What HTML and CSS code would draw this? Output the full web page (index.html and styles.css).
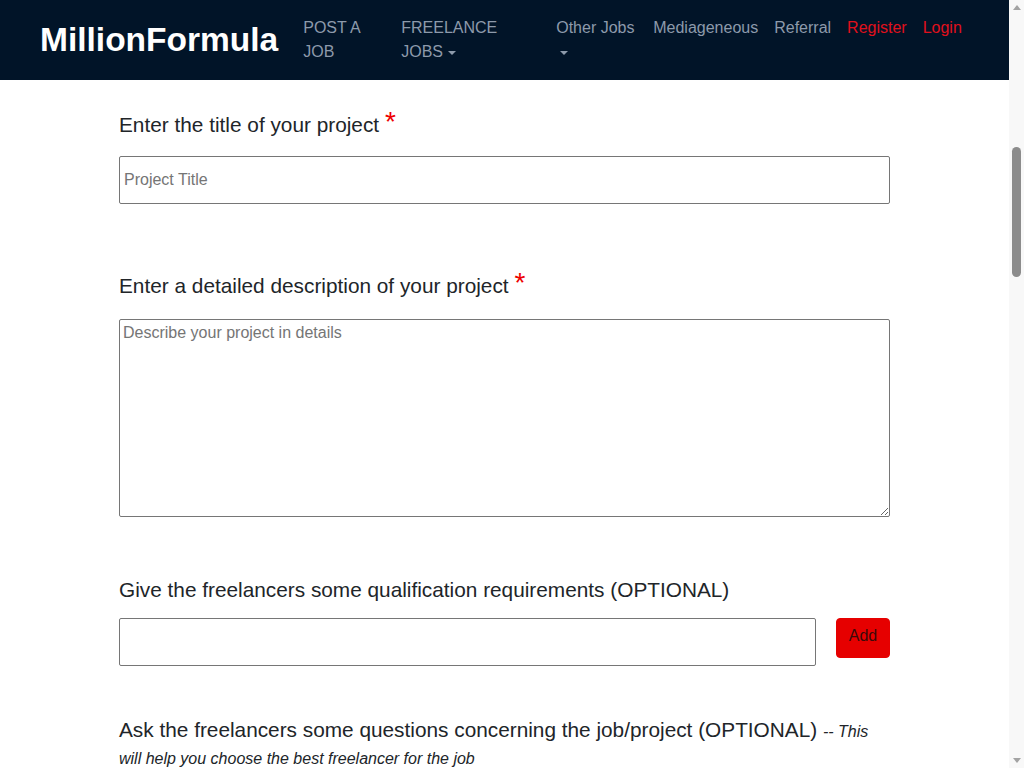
FILE: index.html
```html
<!DOCTYPE html>
<html lang="en">
<head>
<meta charset="utf-8">
<title>MillionFormula - Post a job</title>
<link rel="stylesheet" href="styles.css">
</head>
<body>
<header class="navbar">
  <a class="brand" href="#">MillionFormula</a>
  <nav class="nav">
    <a class="nav-link w-post" href="#">POST A JOB</a>
    <a class="nav-link w-free" href="#">FREELANCE JOBS <span class="caret"></span></a>
    <a class="nav-link w-other" href="#">Other Jobs <span class="caret"></span></a>
    <a class="nav-link" href="#">Mediageneous</a>
    <a class="nav-link" href="#">Referral</a>
    <a class="nav-link red" href="#">Register</a>
    <a class="nav-link red" href="#">Login</a>
  </nav>
</header>
<main class="container">
  <div class="group g1">
    <label class="label">Enter the title of your project <span class="req">*</span></label>
    <input class="field" type="text" placeholder="Project Title">
  </div>
  <div class="group g2">
    <label class="label">Enter a detailed description of your project <span class="req">*</span></label>
    <textarea class="field area" placeholder="Describe your project in details"></textarea>
  </div>
  <div class="group g3">
    <label class="label">Give the freelancers some qualification requirements (OPTIONAL)</label>
    <div class="row">
      <input class="field" type="text">
      <button class="btn-add" type="button">Add</button>
    </div>
  </div>
  <div class="group g4">
    <label class="label">Ask the freelancers some questions concerning the job/project (OPTIONAL) <em class="note">-- This will help you choose the best freelancer for the job</em></label>
    <div class="row">
      <input class="field" type="text">
      <button class="btn-add" type="button">Add</button>
    </div>
  </div>
  <div class="group g5">
    <label class="label">What is your budget for this project? <span class="req">*</span></label>
    <input class="field" type="text" placeholder="Budget">
  </div>
  <div class="group g5">
    <label class="label">How many days should the project last? <span class="req">*</span></label>
    <input class="field" type="text" placeholder="Duration in days">
  </div>
</main>
<div class="scrollbar" aria-hidden="true">
  <span class="sb-arrow up"></span>
  <div class="sb-track"><span class="sb-thumb"></span></div>
  <span class="sb-arrow down"></span>
</div>
</body>
</html>
```
FILE: styles.css
```css
html, body {
  margin: 0;
  padding: 0;
}
body {
  font-family: "Liberation Sans", Arial, sans-serif;
  color: #212529;
  background: #fff;
  margin-right: 15px;
}
.navbar {
  height: 80px;
  background: #011428;
  display: flex;
  align-items: flex-start;
  padding: 0 40px;
  box-sizing: border-box;
}
.brand {
  font-size: 33.5px;
  font-weight: bold;
  color: #fff;
  text-decoration: none;
  line-height: 80px;
  margin-right: 17px;
  white-space: nowrap;
}
.nav {
  display: flex;
  align-items: flex-start;
  padding-top: 16px;
  margin-left: auto;
}
.nav-link {
  display: block;
  padding: 0 8px;
  font-size: 16px;
  line-height: 24px;
  color: #8d9aab;
  text-decoration: none;
  white-space: nowrap;
}
.nav-link.w-post { width: 82px; white-space: normal; }
.nav-link.w-free { width: 139px; white-space: normal; }
.nav-link.w-other { width: 81px; white-space: normal; }
.nav-link.red { color: #e0101c; }
.caret {
  display: inline-block;
  width: 0;
  height: 0;
  border-left: 4px solid transparent;
  border-right: 4px solid transparent;
  border-top: 4px solid #8d9aab;
  vertical-align: middle;
  margin-left: 1px;
}
.w-other .caret { margin-left: 4px; }
.container {
  width: 771px;
  margin: 0 auto;
  padding-top: 31px;
  padding-bottom: 80px;
}
.group {
  display: flex;
  flex-direction: column;
}
.label {
  font-size: 20.8px;
  line-height: 27px;
  color: #212529;
  margin-bottom: 18px;
}
.req {
  color: #ee0000;
  font-size: 28px;
  line-height: 0;
  position: relative;
  top: -1px;
}
.note {
  font-size: 16px;
  line-height: 16px;
  color: #212529;
}
.field {
  display: block;
  width: 100%;
  box-sizing: border-box;
  height: 48px;
  border: 1px solid #767676;
  border-radius: 2px;
  padding: 0 4px;
  font-family: "Liberation Sans", Arial, sans-serif;
  font-size: 16px;
  color: #212529;
  background: #fff;
}
.field::placeholder { color: #757575; }
.area {
  height: 198px;
  padding: 4px 3px;
  resize: vertical;
}
.row {
  display: flex;
  gap: 20px;
  align-items: flex-start;
}
.row .field { flex: 1; width: auto; }
.btn-add {
  width: 54px;
  height: 40px;
  background: #e60000;
  color: #3a0a0a;
  border: 1px solid #e60000;
  border-radius: 4px;
  font-family: "Liberation Sans", Arial, sans-serif;
  font-size: 16px;
  padding: 0 0 4px;
}
.g1 { margin-bottom: 68px; }
.g2 { margin-bottom: 59px; }
.g2 .label { margin-bottom: 20px; }
.g3 { margin-bottom: 50px; }
.g3 .label { margin-bottom: 15px; }
.g4 { margin-bottom: 50px; }
.g5 { margin-bottom: 50px; }

/* fake browser scrollbar */
.scrollbar {
  position: fixed;
  top: 0;
  right: 0;
  width: 15px;
  height: 100vh;
  background: #f8f8f8;
  display: flex;
  flex-direction: column;
  align-items: center;
}
.sb-arrow {
  display: block;
  width: 0;
  height: 0;
  border-left: 4px solid transparent;
  border-right: 4px solid transparent;
  margin: 5px 0;
}
.sb-arrow.up { border-bottom: 5px solid #a3a3a3; }
.sb-arrow.down { border-top: 5px solid #a3a3a3; }
.sb-track {
  flex: 1;
  width: 100%;
  display: flex;
  justify-content: center;
  padding-top: 132px;
}
.sb-thumb {
  display: block;
  width: 9px;
  height: 130px;
  border-radius: 5px;
  background: #8c8c8c;
}
```
